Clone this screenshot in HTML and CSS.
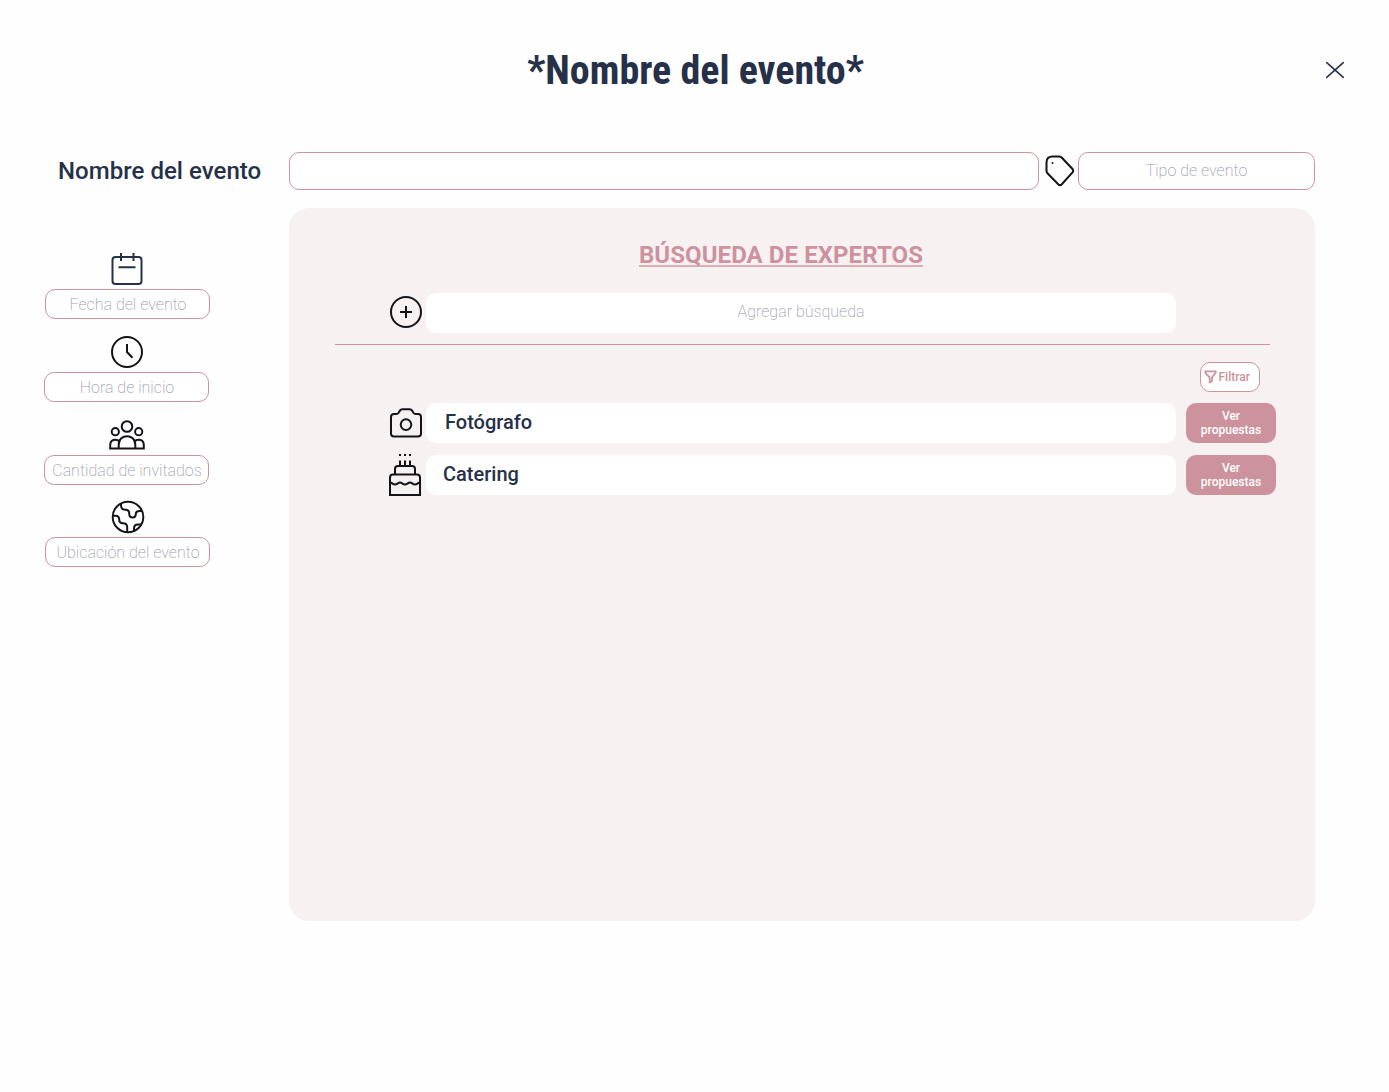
FILE: index.html
```html
<!DOCTYPE html>
<html lang="es">
<head>
<meta charset="utf-8">
<title>Nombre del evento</title>
<link rel="stylesheet" href="styles.css">
</head>
<body>
<main class="modal">
  <header class="header">
    <h1 class="title">*Nombre del evento*</h1>
    <button class="close" aria-label="Cerrar">
      <svg width="20" height="18" viewBox="0 0 20 18"><path d="M1.700 1.700l16.600 14.600M18.300 1.700l-16.600 14.600"/></svg>
    </button>
  </header>
  <section class="event-row">
    <label class="label">Nombre del evento</label>
    <div class="field name-field"></div>
    <svg class="icon tag" width="30" height="32" viewBox="0 0 30 32"><path d="M7.500 1.500h6.700q1.600 0 2.700 1.200L27.500 14q1.400 1.700 0 3.400L16.800 29.200q-1.800 1.800-3.600 0L2.500 18.300Q1.500 17.200 1.500 15.700V7.500Q1.500 1.500 7.500 1.500Z"/><circle cx="7.500" cy="8" r="1" class="solid"/></svg>
    <div class="field type-field">Tipo de evento</div>
  </section>
  <div class="content">
    <aside class="sidebar">
      <div class="detail">
        <svg class="icon navy" width="32" height="34" viewBox="0 0 32 34"><rect x="1.500" y="5" width="29" height="27" rx="3"/><path d="M10 1v8M22.500 1v8M7.500 15.200h17"/></svg>
        <div class="field small">Fecha del evento</div>
      </div>
      <div class="detail shift">
        <svg class="icon" width="34" height="34" viewBox="0 0 34 34"><circle cx="17" cy="17" r="15"/><path d="M17 9v8l5.500 5.700"/></svg>
        <div class="field small">Hora de inicio</div>
      </div>
      <div class="detail shift">
        <svg class="icon" width="36" height="34" viewBox="0 1.700 36 34"><circle cx="18" cy="10.200" r="5.300"/><circle cx="6.300" cy="15.400" r="3.600"/><circle cx="29.700" cy="15.400" r="3.600"/><path d="M1.200 32.200V29C1.200 23 6.500 22.500 10 24.500M34.800 32.200V29C34.800 23 29.500 22.500 26 24.500M9.700 32.200V28.500C9.700 17 26.300 17 26.300 28.500v3.700M.2 32.200h35.600"/></svg>
        <div class="field small">Cantidad de invitados</div>
      </div>
      <div class="detail">
        <svg class="icon globe" width="34" height="34" viewBox="0 0 34 34"><circle cx="17" cy="17" r="15.300"/><path d="M10 3.500v1.800q0 4.500 4.500 4.500 3.700 0 3.700 3.500 0 4.200 3.300 4.200t3.300-3.500q0-3 3.700-3H31M2 15.800h2.500q3.700 0 3.700 3.700 0 3.700 3.700 3.700 4.300 0 4.300 4.300V32M23 31.500v-3q0-4 4-4h4"/></svg>
        <div class="field small">Ubicación del evento</div>
      </div>
    </aside>
    <section class="panel">
      <h2 class="panel-title">BÚSQUEDA DE EXPERTOS</h2>
      <div class="row search">
        <svg class="icon" width="34" height="34" viewBox="0 1 34 34"><circle cx="17" cy="17" r="15"/><path d="M17 11v12M11 17h12"/></svg>
        <div class="box placeholder">Agregar búsqueda</div>
      </div>
      <hr class="divider">
      <button class="filter">
        <svg width="13" height="14" viewBox="0 0 13 14"><path d="M1.300 1.300h10.400v1.500L8 7.300v3.800l-2.300 1.500V7.300L1.300 2.800Z"/></svg>
        <span>Filtrar</span>
      </button>
      <div class="row">
        <svg class="icon" width="34" height="34" viewBox="0 0 34 34"><path d="M5 8h2.500q1.200 0 1.900-1l1.700-2.600q.8-1.200 2.200-1.200h7.400q1.400 0 2.200 1.200L24.600 7q.7 1 1.900 1H29q3 0 3 3v16.500q0 3-3 3H5q-3 0-3-3V11q0-3 3-3Z"/><circle cx="17" cy="18.600" r="5.300"/></svg>
        <div class="box">Fotógrafo</div>
        <button class="proposals">Ver propuestas</button>
      </div>
      <div class="row">
        <svg class="icon cake" width="34" height="44" viewBox="0 0 34 44"><path d="M2 42V24.500q0-3 3-3h24q3 0 3 3V42ZM7 21.500V16q0-3 3-3h14q3 0 3 3v5.500M12 13V7.500M17 13V7.500M22 13V7.500M2 29.500c2 0 2.500 2 5 2s3-2 5-2 2.500 2 5 2 3-2 5-2 2.500 2 5 2 3-2 5-2"/><path class="solid" d="M11 1h2v2h-2zM16 1h2v2h-2zM21 1h2v2h-2z"/></svg>
        <div class="box catering">Catering</div>
        <button class="proposals">Ver propuestas</button>
      </div>
    </section>
  </div>
</main>
</body>
</html>
```

FILE: styles.css
```css
* { box-sizing: border-box; }

body {
  margin: 0;
  background: #fefefe;
  color: #263149;
  font-family: Roboto, "Liberation Sans", sans-serif;
}

button { font: inherit; cursor: pointer; }

.modal { min-height: 1092px; }

.header {
  height: 152px;
  display: grid;
  grid-template-columns: 80px 1fr 80px;
  padding: 0 14px 12px 16px;
  align-items: center;
}

.title {
  grid-column: 2;
  margin: 0;
  padding-top: 2px;
  text-align: center;
  font-family: "Roboto Condensed", Roboto, sans-serif;
  font-stretch: 75%;
  font-size: 40px;
  font-weight: 700;
  line-height: 48px;
}

.close {
  display: flex;
  justify-content: center;
  border: 0;
  padding: 0;
  background: none;
}

.close svg {
  fill: none;
  stroke: #263149;
  stroke-width: 1.6;
  stroke-linecap: round;
}

.event-row {
  display: flex;
  height: 38px;
  padding-left: 58px;
  align-items: center;
}

.label {
  width: 231px;
  font-size: 24px;
  font-weight: 500;
  letter-spacing: 0.04px;
}

.field {
  display: flex;
  align-items: center;
  justify-content: center;
  border: 1px solid #cc929e;
  border-radius: 10px;
  background: #fff;
  color: #9ca0ad;
  font-size: 16px;
  font-weight: 200;
  white-space: nowrap;
}

.name-field { width: 750px; height: 38px; }
.type-field { width: 237px; height: 38px; padding-bottom: 2px; }
.small { width: 165px; height: 30px; padding-left: 1px; }

.icon {
  flex: none;
  display: block;
  fill: none;
  stroke: #141418;
  stroke-width: 2;
}

.navy { stroke: #263149; margin-right: 2px; }
.solid { fill: #141418; stroke: none; }
.tag { margin: 0 2.6px 0 6.4px; }
.globe { margin-left: 1px; }

.content {
  display: flex;
  padding: 18px 0 0 44px;
}

.sidebar {
  width: 245px;
  padding-top: 44px;
}

.detail {
  width: 165px;
  margin: 0 0 16px 1px;
  display: flex;
  flex-direction: column;
  align-items: center;
  gap: 3px;
}

.shift { margin-left: 0; }
.shift + .shift { margin-bottom: 15px; }

.panel {
  width: 1026px;
  height: 713px;
  padding: 33px 39px 0 46px;
  border-radius: 20px;
  background: #f8f1f2;
}

.panel-title {
  margin: 0 0 24px;
  padding-right: 49px;
  text-align: center;
  color: #cc929e;
  font-size: 24px;
  font-weight: 700;
  line-height: 28px;
  letter-spacing: 0.08px;
  text-decoration: underline;
  text-decoration-color: #d9aeb7;
  text-decoration-thickness: 2px;
  text-underline-offset: 2px;
  text-decoration-skip-ink: none;
}

.row {
  display: flex;
  align-items: center;
  height: 40px;
  margin: 0 0 12px 54px;
}

.row.search { margin-bottom: 11px; }

.box {
  width: 750px;
  height: 40px;
  margin: 0 10px 0 3px;
  padding-left: 19px;
  border-radius: 10px;
  background: #fff;
  font-size: 20px;
  font-weight: 500;
  line-height: 39px;
}

.placeholder {
  padding: 0;
  text-align: center;
  color: #9ca0ad;
  font-size: 16px;
  font-weight: 200;
  line-height: 37px;
}

.cake { margin: 0 1px 0 -1px; }
.catering { padding-left: 17px; }

.divider {
  width: 935px;
  height: 1px;
  margin: 0 0 17px;
  border: 0;
  background: #cc929e;
}

.filter {
  display: flex;
  align-items: center;
  width: 60px;
  height: 30px;
  margin: 0 0 11px 865px;
  padding: 0 0 0 3px;
  gap: 1.5px;
  border: 1px solid #cc929e;
  border-radius: 10px;
  background: #fff;
  color: #cc929e;
  font-size: 12px;
  font-weight: 500;
}

.filter svg {
  fill: none;
  stroke: #cc929e;
  stroke-width: 1.8;
  stroke-linejoin: round;
}

.proposals {
  width: 90px;
  height: 40px;
  padding: 0 14px;
  border: 0;
  border-radius: 10px;
  background: #cc929e;
  color: #fff;
  font-size: 12px;
  font-weight: 500;
  line-height: 14px;
}
```
